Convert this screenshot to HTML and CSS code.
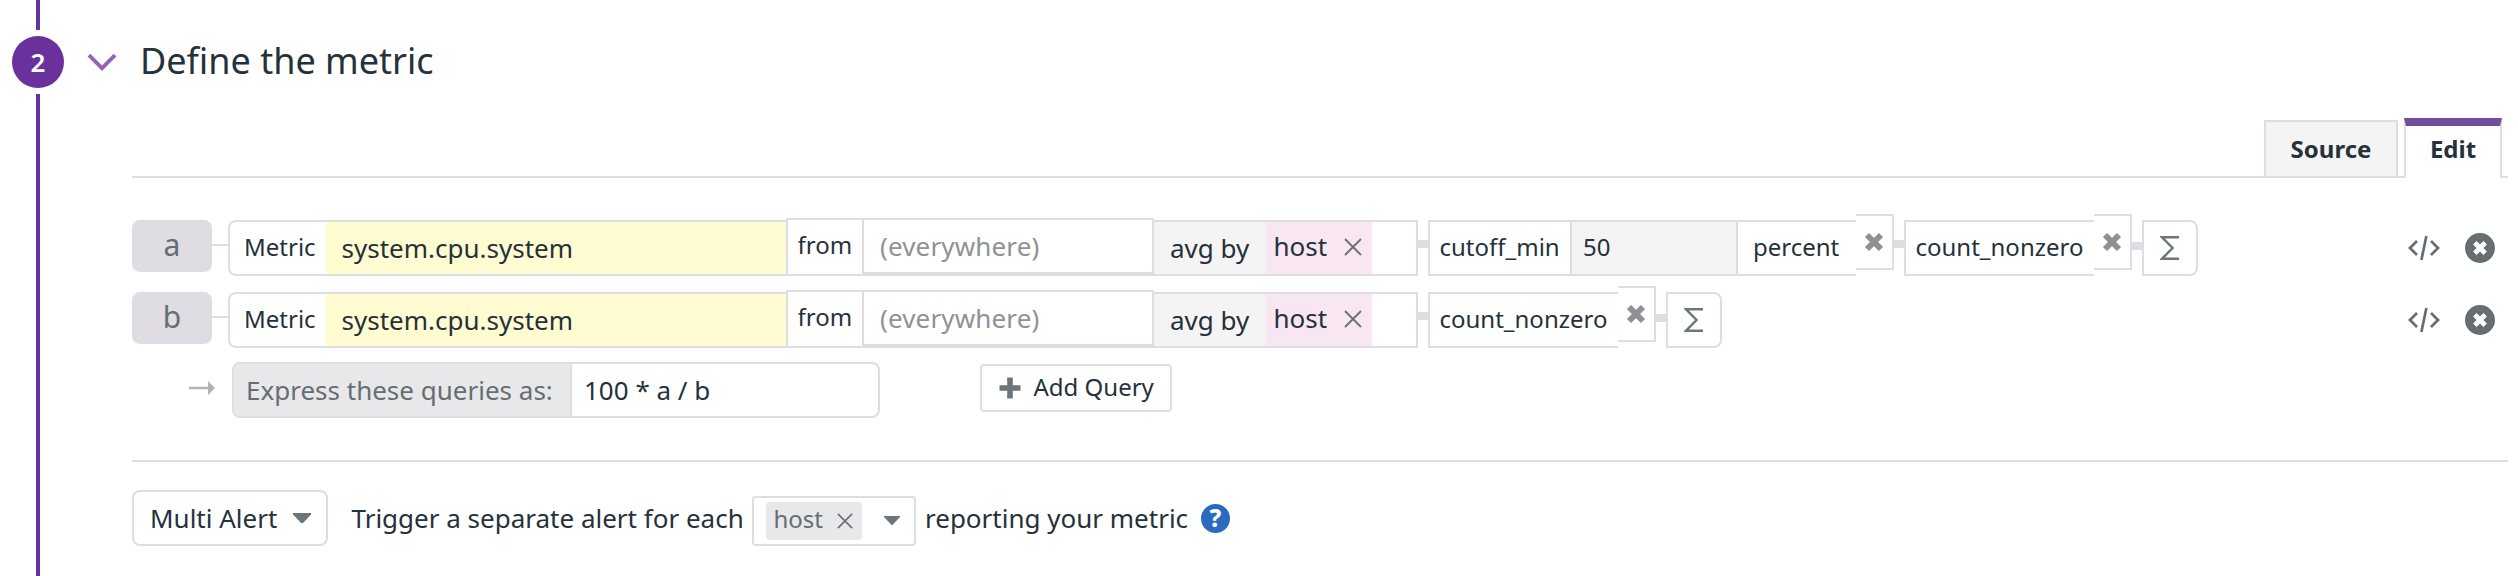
FILE: index.html
```html
<!DOCTYPE html>
<html lang="en">
<head>
<meta charset="utf-8">
<title>Define the metric</title>
<link rel="stylesheet" href="styles.css">
</head>
<body>
<svg class="defs" width="0" height="0">
  <symbol id="cross" viewBox="0 0 20 20"><path d="M3 3L17 17M17 3L3 17" fill="none" stroke="#918f96" stroke-width="6"/></symbol>
  <symbol id="thin-x" viewBox="0 0 18 18"><path d="M1 1L17 17M17 1L1 17" fill="none" stroke="#6b6d75" stroke-width="1.8"/></symbol>
  <symbol id="sigma" viewBox="0 0 20 26"><path d="M19 2.3H2L12.6 13L2 23.7H19" fill="none" stroke="#6c757c" stroke-width="2.4"/></symbol>
  <symbol id="code" viewBox="0 0 32 26"><path d="M9 6L2 13L9 20M23 6L30 13L23 20M18.4 1L13.4 25" fill="none" stroke="#666d73" stroke-width="2.7"/></symbol>
  <symbol id="remove" viewBox="0 0 30 30"><circle cx="15" cy="15" r="15" fill="#666d73"/><path d="M9.8 9.8L20.2 20.2M20.2 9.8L9.8 20.2" stroke="#fff" stroke-width="4.8"/></symbol>
</svg>
<div class="step">
  <div class="rail">
    <div class="rail-top"></div>
    <div class="number">2</div>
    <div class="rail-line"></div>
  </div>
  <main class="content">
    <header class="heading">
      <svg class="chevron" width="30" height="20" viewBox="0 0 30 20"><path d="M2 2.2L15 15.2L28 2.2" fill="none" stroke="#9263b8" stroke-width="3.8"/></svg>
      <h1>Define the metric</h1>
    </header>
    <nav class="tabs">
      <div class="tab">Source</div>
      <div class="tab active">Edit</div>
    </nav>
    <section class="queries">
      <div class="query">
        <div class="badge">a</div><div class="wire"></div>
        <div class="label metric">Metric</div><div class="metric-name">system.cpu.system</div>
        <div class="from">from</div><div class="scope">(everywhere)</div>
        <div class="avg">avg by</div>
        <div class="group"><div class="tag">host<svg width="18" height="18"><use href="#thin-x"/></svg></div></div>
        <div class="link"></div>
        <div class="func cutoff">cutoff_min</div><div class="value">50</div><div class="unit">percent</div>
        <div class="drop"><svg width="20" height="20"><use href="#cross"/></svg></div>
        <div class="link"></div>
        <div class="func">count_nonzero</div>
        <div class="drop"><svg width="20" height="20"><use href="#cross"/></svg></div>
        <div class="link low"></div>
        <div class="sum"><svg width="20" height="26"><use href="#sigma"/></svg></div>
        <div class="actions"><svg width="32" height="26"><use href="#code"/></svg><svg width="30" height="30"><use href="#remove"/></svg></div>
      </div>
      <div class="query">
        <div class="badge">b</div><div class="wire"></div>
        <div class="label metric">Metric</div><div class="metric-name">system.cpu.system</div>
        <div class="from">from</div><div class="scope">(everywhere)</div>
        <div class="avg">avg by</div>
        <div class="group"><div class="tag">host<svg width="18" height="18"><use href="#thin-x"/></svg></div></div>
        <div class="link"></div>
        <div class="func">count_nonzero</div>
        <div class="drop"><svg width="20" height="20"><use href="#cross"/></svg></div>
        <div class="link low"></div>
        <div class="sum"><svg width="20" height="26"><use href="#sigma"/></svg></div>
        <div class="actions"><svg width="32" height="26"><use href="#code"/></svg><svg width="30" height="30"><use href="#remove"/></svg></div>
      </div>
      <div class="formula">
        <svg class="arrow" width="26" height="14" viewBox="0 0 26 14"><path d="M0 5.7H19V0L26 7L19 14V8.3H0Z" fill="#b3b1b6"/></svg>
        <div class="expression"><div class="caption">Express these queries as:</div><div class="input">100 * a / b</div></div>
        <div class="add"><svg width="22" height="22" viewBox="0 0 22 22"><path d="M11 0.5V21.5M0.5 11H21.5" stroke="#6c757c" stroke-width="5.6"/></svg>Add Query</div>
      </div>
    </section>
    <section class="alert">
      <div class="mode">Multi Alert<svg width="18" height="10" viewBox="0 0 18 10"><path d="M0 0H18V1.5L10.5 9.4Q9 10.6 7.5 9.4L0 1.5Z" fill="#6c757c"/></svg></div>
      <span class="before">Trigger a separate alert for each</span>
      <div class="select"><div class="chip">host<svg width="16" height="16"><use href="#thin-x"/></svg></div><svg width="16" height="9" viewBox="0 0 16 9"><path d="M0 0H16V1L9 8.4Q8 9.4 7 8.4L0 1Z" fill="#6c757c"/></svg></div>
      <span class="after">reporting your metric</span>
      <div class="help">?</div>
    </section>
  </main>
</div>
</body>
</html>
```
FILE: styles.css
```css
* { box-sizing: border-box; }
body { margin: 0; background: #fff; color: #25313b; font: 26px "Noto Sans", sans-serif; white-space: nowrap; }
svg { display: block; flex: none; }
.defs { position: absolute; }
.step { display: flex; height: 576px; overflow: hidden; }
.rail { width: 76px; flex: none; display: flex; flex-direction: column; align-items: center; }
.rail-top { width: 4px; height: 30px; background: #5f35a0; margin-bottom: 6px; }
.number { width: 52px; height: 52px; border-radius: 50%; background: #6a309c; color: #fff; font-weight: 600; font-size: 26px; line-height: 52px; text-align: center; }
.rail-line { width: 4px; flex: 1; margin-top: 6px; background: #6b309d; }
.content { width: 2432px; padding-left: 56px; flex: none; }
.heading { display: flex; height: 118px; margin-left: -45px; }
.chevron { margin-top: 53px; }
h1 { margin: 0 0 0 23px; font-size: 36px; font-weight: 400; line-height: 121px; }
.tabs { display: flex; justify-content: flex-end; height: 60px; padding-right: 6px; border-bottom: 2px solid #dfdde3; }
.tab { width: 134px; height: 58px; margin-top: 2px; border: 2px solid #dfdde3; background: #f4f4f4; font-size: 24px; font-weight: 700; line-height: 54px; text-align: center; }
.tab.active { width: 98px; height: 60px; margin: 0 0 0 6px; border-top: 8px solid #734e9e; border-bottom: 0; background: #fff; line-height: 45px; }
.queries { height: 284px; padding-top: 42px; border-bottom: 2px solid #dfdde3; }
.query { display: flex; align-items: flex-start; height: 72px; }
.query > div { flex: none; }
.badge { width: 80px; height: 52px; border-radius: 8px; background: #dfdde3; color: #666d73; font-size: 30px; line-height: 49px; text-align: center; }
.wire { width: 16px; height: 2px; margin-top: 24px; background: #dfdde3; }
.metric, .metric-name, .avg, .group, .func, .value, .unit, .sum { height: 56px; border: 0 solid #dfdde3; border-width: 2px 0; }
.metric { width: 98px; border-left-width: 2px; border-radius: 8px 0 0 8px; padding-left: 14px; font-size: 24px; line-height: 50px; }
.metric-name { width: 460px; padding-left: 15.5px; background: #fffcd1; background-clip: padding-box; line-height: 52px; }
.from { width: 76px; height: 58px; margin-top: -2px; border: 2px solid #dfdde3; border-right: 0; padding-left: 9.5px; font-size: 24px; line-height: 50px; }
.scope { width: 292px; height: 58px; margin-top: -2px; border: 2px solid #dfdde3; border-bottom-width: 4px; padding-left: 16px; color: #8d9296; letter-spacing: 0.15px; line-height: 52px; }
.avg { width: 112px; padding-left: 16px; background: #f4f4f4; line-height: 52px; }
.group { width: 152px; border-right-width: 2px; }
.tag { display: flex; width: 106px; height: 52px; padding-left: 7.5px; background: #f9e6f3; line-height: 48px; }
.tag svg { margin: 16px 0 0 16.5px; }
.link { width: 10px; height: 8px; margin-top: 20px; background: #dfdde3; }
.link.low { margin-top: 22px; }
.func { width: 190px; border-left-width: 2px; padding-left: 9.5px; font-size: 24px; line-height: 50px; }
.cutoff { width: 142px; }
.value { width: 168px; border-width: 2px; padding-left: 11px; background: #f4f4f4; font-size: 24px; line-height: 50px; }
.unit { width: 118px; padding-left: 15px; font-size: 24px; line-height: 50px; }
.drop { width: 38px; height: 56px; margin-top: -6px; border: 2px solid #dfdde3; border-left: 0; padding: 16px 0 0 8px; }
.sum { display: flex; width: 56px; border-width: 2px; border-radius: 0 8px 8px 0; padding: 13px 0 0 16px; }
.actions { display: flex; align-items: center; gap: 25px; height: 56px; margin-left: auto; padding-right: 13px; }
.formula { display: flex; padding-left: 57px; margin-top: -2px; }
.arrow { margin-top: 19px; }
.expression { display: flex; width: 648px; height: 56px; margin-left: 17px; border: 2px solid #dfdde3; border-radius: 8px; overflow: hidden; line-height: 52px; }
.caption { width: 338px; padding-left: 12px; border-right: 2px solid #dfdde3; background: #e8e8ea; color: #666d73; }
.input { padding-left: 12px; }
.add { display: flex; gap: 12.5px; width: 192px; height: 48px; margin: 2px 0 0 100px; border: 2px solid #dfdde3; border-radius: 4px; padding-left: 17px; font-size: 24px; line-height: 42px; }
.add svg { margin-top: 11px; }
.alert { display: flex; align-items: flex-start; padding-top: 28px; line-height: 56px; }
.mode { display: flex; align-items: center; justify-content: space-between; width: 196px; height: 56px; border: 2px solid #dfdde3; border-radius: 8px; padding: 0 15px 0 16px; line-height: 52px; }
.before { width: 400.5px; margin-left: 23.5px; }
.select { display: flex; width: 164px; height: 50px; margin-top: 6px; border: 2px solid #dfdde3; border-radius: 4px; padding: 4px 0 0 12px; }
.select > svg { margin: 14px 0 0 22px; }
.chip { display: flex; width: 96px; height: 38px; border-radius: 4px; background: #e8e8ea; padding-left: 7.5px; color: #666d73; font-size: 24px; line-height: 34px; }
.chip svg { margin: 11px 0 0 13.5px; }
.after { width: 276px; margin-left: 9px; }
.help { width: 29px; height: 29px; margin-top: 14px; border-radius: 50%; background: #2a6bbf; color: #fff; font-size: 24px; font-weight: 800; line-height: 28px; text-align: center; }
```
